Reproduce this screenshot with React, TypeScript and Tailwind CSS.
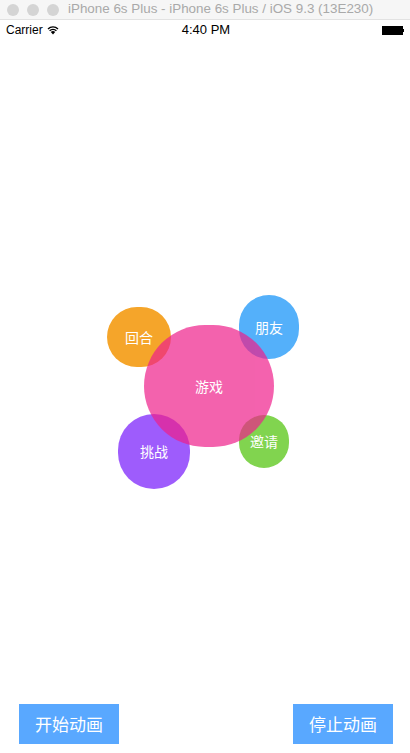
const circles = [
  { label: '回合', cls: 'left-[107px] top-[267px] w-[64px] h-[60px] bg-[#F5A52A]' },
  { label: '朋友', cls: 'left-[239px] top-[255px] w-[60px] h-[64px] bg-[#0C90F9] opacity-70' },
  { label: '挑战', cls: 'left-[118px] top-[374px] w-[72px] h-[75px] bg-[#7618FB] opacity-70' },
  { label: '邀请', cls: 'left-[239px] top-[375px] w-[50px] h-[53px] bg-[#4CC205] opacity-70' },
  { label: '游戏', cls: 'left-[144px] top-[285px] w-[130px] h-[122px] bg-[#EF208B] opacity-70' },
];

function Wifi() {
  return (
    <svg width="12" height="10" viewBox="0 0 12 10" className="ml-1">
      <path d="M6 9.5 L3.8 7 A3.2 3.2 0 0 1 8.2 7 Z" fill="#000" />
      <path d="M2.6 5.8 A5 5 0 0 1 9.4 5.8" stroke="#000" strokeWidth="1.4" fill="none" />
      <path d="M1 3.9 A7.3 7.3 0 0 1 11 3.9" stroke="#000" strokeWidth="1.4" fill="none" />
    </svg>
  );
}

export default function App() {
  return (
    <div className="h-[753px] w-[410px] flex flex-col bg-white overflow-hidden" style={{ fontFamily: '"Liberation Sans", "Noto Sans CJK SC", sans-serif' }}>
      {/* window title bar */}
      <div className="h-[20px] flex items-center bg-[#f6f6f6] border-b border-[#e2e2e2] px-[7px]">
        <div className="flex gap-[8px]">
          <span className="w-[12px] h-[12px] rounded-full bg-[#d4d4d4]" />
          <span className="w-[12px] h-[12px] rounded-full bg-[#d4d4d4]" />
          <span className="w-[12px] h-[12px] rounded-full bg-[#d4d4d4]" />
        </div>
        <span className="ml-[9px] text-[13.4px] text-[#a9a9a9] whitespace-nowrap">iPhone 6s Plus - iPhone 6s Plus / iOS 9.3 (13E230)</span>
      </div>

      {/* status bar */}
      <div className="h-[20px] flex items-center justify-between px-[6px] text-[12px] text-black">
        <div className="flex items-center w-[80px]">
          Carrier
          <Wifi />
        </div>
        <span className="text-[13px] ml-[2px]">4:40 PM</span>
        <div className="w-[80px] flex justify-end items-center">
          <span className="w-[21px] h-[9px] bg-black" />
          <span className="w-[1px] h-[3px] bg-black" />
        </div>
      </div>

      {/* bubbles */}
      <div className="relative flex-1" style={{ fontFamily: '"Noto Sans CJK SC", sans-serif' }}>
        {circles.map((c) => (
          <div key={c.label} className={`absolute rounded-full flex items-center justify-center text-[14px] text-white ${c.cls}`}>
            {c.label}
          </div>
        ))}
      </div>

      {/* buttons */}
      <div className="flex justify-between pl-[19px] pr-[17px] pb-[9px]" style={{ fontFamily: '"Noto Sans CJK SC", sans-serif' }}>
        <button className="w-[100px] h-[40px] bg-[#59a8ff] text-white text-[17px]">开始动画</button>
        <button className="w-[100px] h-[40px] bg-[#59a8ff] text-white text-[17px]">停止动画</button>
      </div>
    </div>
  );
}
